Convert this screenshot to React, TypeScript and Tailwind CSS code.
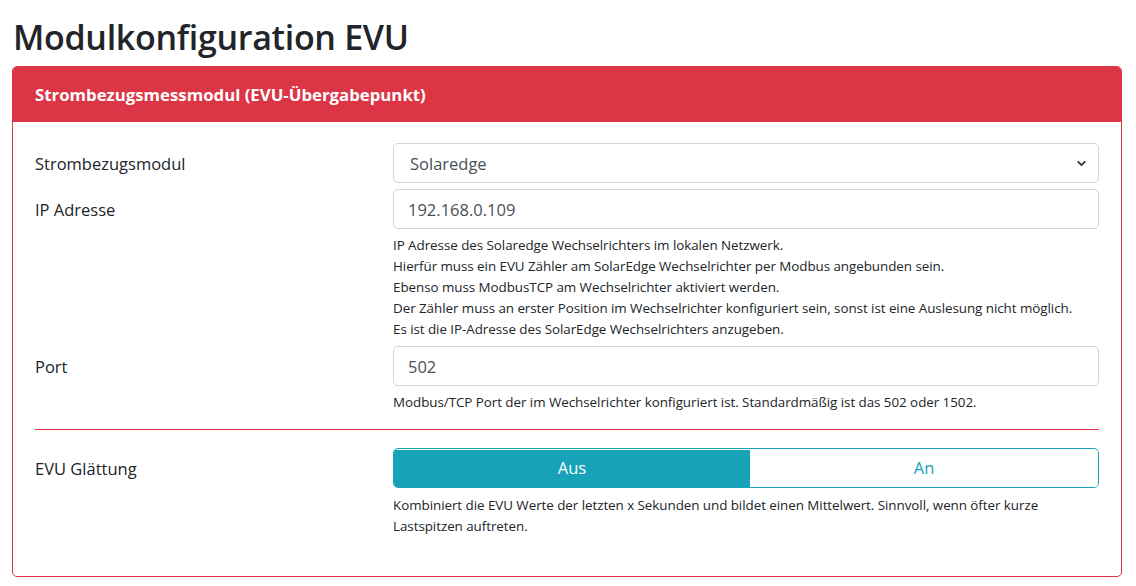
import { ChevronDown } from "lucide-react";

const FONT = { fontFamily: '"Open Sans", "Noto Sans", sans-serif' };

function HelpText({ lines, top = "mt-[6px]" }: { lines: string[]; top?: string }) {
  return (
    <div className={`${top} text-[13.4px] leading-[21px] tracking-[-0.05px] text-[#212529]`}>
      {lines.map((l) => (
        <div key={l}>{l}</div>
      ))}
    </div>
  );
}

export default function App() {
  return (
    <div className="min-h-[586px] bg-white text-[#212529]" style={FONT}>
      <div className="px-[12px] pt-[17px]">
        <h1 className="mb-[8px] pl-[1px] text-[34px] font-semibold leading-[41px] tracking-[-0.3px] text-[#212529]">
          Modulkonfiguration EVU
        </h1>

        {/* Card */}
        <div className="w-[1110px] overflow-hidden rounded-[5px] border border-[#dc3545]">
          <div className="flex h-[55px] items-center bg-[#dc3545] px-[22px] text-[16.8px] font-bold text-white">
            Strombezugsmessmodul (EVU-Übergabepunkt)
          </div>

          <div className="px-[22px] pt-[21px] pb-[39px]">
            {/* Strombezugsmodul */}
            <div className="flex">
              <div className="flex h-[40px] w-[358px] items-center pt-[2px] text-[16.5px]">
                Strombezugsmodul
              </div>
              <div className="relative flex h-[40px] flex-1 items-center rounded-[5px] border border-[#ced4da] px-[16px] pt-[2px] text-[16.5px] text-[#495057]">
                Solaredge
                <ChevronDown
                  className="absolute right-[10px] top-[13px] text-[#343a40]"
                  size={13}
                  strokeWidth={3.5}
                />
              </div>
            </div>

            {/* IP Adresse */}
            <div className="mt-[6px] flex">
              <div className="flex h-[40px] w-[358px] items-center pt-[2px] text-[16.5px]">
                IP Adresse
              </div>
              <div className="flex-1">
                <div className="flex h-[40px] items-center rounded-[5px] border border-[#ced4da] px-[14px] pt-[2px] text-[16.5px] text-[#495057]">
                  192.168.0.109
                </div>
                <HelpText
                  lines={[
                    "IP Adresse des Solaredge Wechselrichters im lokalen Netzwerk.",
                    "Hierfür muss ein EVU Zähler am SolarEdge Wechselrichter per Modbus angebunden sein.",
                    "Ebenso muss ModbusTCP am Wechselrichter aktiviert werden.",
                    "Der Zähler muss an erster Position im Wechselrichter konfiguriert sein, sonst ist eine Auslesung nicht möglich.",
                    "Es ist die IP-Adresse des SolarEdge Wechselrichters anzugeben.",
                  ]}
                />
              </div>
            </div>

            {/* Port */}
            <div className="mt-[6px] flex">
              <div className="flex h-[40px] w-[358px] items-center pt-[2px] text-[16.5px]">
                Port
              </div>
              <div className="flex-1">
                <div className="flex h-[40px] items-center rounded-[5px] border border-[#ced4da] px-[14px] pt-[2px] text-[16.5px] text-[#495057]">
                  502
                </div>
                <HelpText
                  lines={[
                    "Modbus/TCP Port der im Wechselrichter konfiguriert ist. Standardmäßig ist das 502 oder 1502.",
                  ]}
                />
              </div>
            </div>

            <hr className="mt-[16px] mb-[18px] border-0 border-t border-[#dc3545]" />

            {/* EVU Glättung */}
            <div className="flex">
              <div className="flex h-[40px] w-[358px] items-center pt-[2px] text-[16.5px]">
                EVU Glättung
              </div>
              <div className="flex-1">
                <div className="flex h-[40px] overflow-hidden rounded-[5px] border border-[#17a2b8] pt-[1px] text-[16.5px]">
                  <div className="flex w-[356px] items-center justify-center bg-[#17a2b8] text-white">
                    Aus
                  </div>
                  <div className="flex flex-1 items-center justify-center bg-white text-[#17a2b8]">
                    An
                  </div>
                </div>
                <HelpText
                  top="mt-[7px]"
                  lines={[
                    "Kombiniert die EVU Werte der letzten x Sekunden und bildet einen Mittelwert. Sinnvoll, wenn öfter kurze",
                    "Lastspitzen auftreten.",
                  ]}
                />
              </div>
            </div>
          </div>
        </div>
      </div>
    </div>
  );
}
